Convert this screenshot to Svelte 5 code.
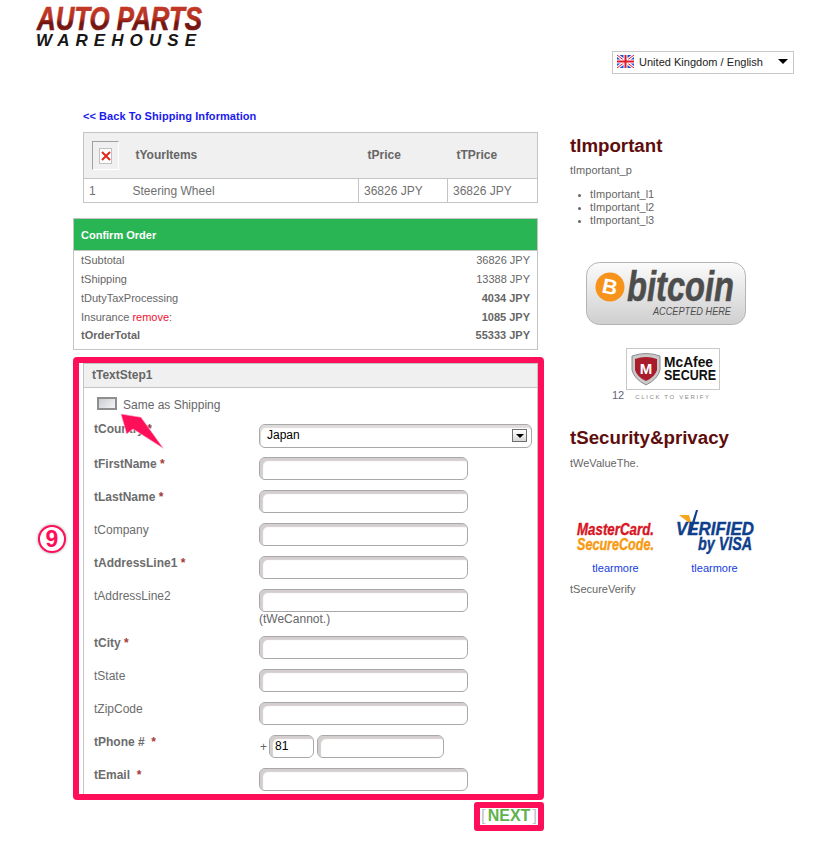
<script lang="ts">
  const rows = [
    { label: 'tFirstName', req: true, bold: true },
    { label: 'tLastName', req: true, bold: true },
    { label: 'tCompany' },
    { label: 'tAddressLine1', req: true, bold: true },
    { label: 'tAddressLine2', hint: '(tWeCannot.)' },
    { label: 'tCity', req: true, bold: true },
    { label: 'tState' },
    { label: 'tZipCode' },
  ];
</script>

<div class="page">
  <header class="top">
    <svg class="logo" width="172" height="44" viewBox="0 0 172 44" aria-label="Auto Parts Warehouse">
      <defs>
        <linearGradient id="red" x1="0" y1="0" x2="0" y2="1">
          <stop offset="0" stop-color="#c9402b" />
          <stop offset="0.5" stop-color="#b5301f" />
          <stop offset="0.62" stop-color="#6e1410" />
          <stop offset="1" stop-color="#8c1c14" />
        </linearGradient>
      </defs>
      <text x="1" y="25" textLength="165" lengthAdjust="spacingAndGlyphs" class="logo-a" fill="url(#red)" stroke="url(#red)">AUTO PARTS</text>
      <text x="0" y="41" textLength="160" class="logo-b">WAREHOUSE</text>
    </svg>
    <div class="locale">
      <svg width="17" height="13" viewBox="0 0 17 13">
        <rect width="17" height="13" fill="#1f4fd8" />
        <path d="M0 0L17 13M17 0L0 13" stroke="#fff" stroke-width="3" />
        <path d="M0 0L17 13M17 0L0 13" stroke="#e0182d" stroke-width="1" />
        <path d="M8.5 0V13M0 6.5H17" stroke="#fff" stroke-width="4" />
        <path d="M8.5 0V13M0 6.5H17" stroke="#e0182d" stroke-width="2" />
      </svg>
      <span>United Kingdom / English</span>
      <i class="caret"></i>
    </div>
  </header>

  <div class="columns">
    <main class="main">
      <a class="back" href="#back">&lt;&lt; Back To Shipping Information</a>

      <table class="items">
        <colgroup><col class="c1" /><col class="c2" /><col class="c3" /><col class="c4" /></colgroup>
        <thead>
          <tr>
            <th class="thumb-cell">
              <div class="thumb">
                <div class="broken">
                  <svg width="10" height="10" viewBox="0 0 10 10"><path d="M1 1L9 9M9 1L1 9" stroke="#e0281c" stroke-width="2" /></svg>
                </div>
              </div>
            </th>
            <th class="name-h">tYourItems</th>
            <th>tPrice</th>
            <th>tTPrice</th>
          </tr>
        </thead>
        <tbody>
          <tr>
            <td class="idx">1</td>
            <td class="name">Steering Wheel</td>
            <td class="price">36826 JPY</td>
            <td class="price">36826 JPY</td>
          </tr>
        </tbody>
      </table>

      <section class="confirm">
        <h3>Confirm Order</h3>
        <div class="line"><span>tSubtotal</span><span>36826 JPY</span></div>
        <div class="line"><span>tShipping</span><span>13388 JPY</span></div>
        <div class="line"><span>tDutyTaxProcessing</span><b>4034 JPY</b></div>
        <div class="line"><span>Insurance <a href="#remove">remove</a>:</span><b>1085 JPY</b></div>
        <div class="line total"><b>tOrderTotal</b><b>55333 JPY</b></div>
      </section>

      <div class="highlight">
        <div class="step9">9</div>
        <section class="panel">
          <h4>tTextStep1</h4>
          <div class="same">
            <span class="check"></span>
            <span>Same as Shipping</span>
          </div>

          <div class="row">
            <label class="country" for="country">tCountry <em>*</em></label>
            <div class="select-wrap">
              <select id="country"><option>Japan</option></select>
              <span class="sel-btn"><i></i></span>
            </div>
          </div>

          {#each rows as r}
            <div class="row">
              <label class:bold={r.bold}>{r.label}{#if r.req}&nbsp;<em>*</em>{/if}</label>
              <div>
                <input type="text" />
                {#if r.hint}<div class="hint">{r.hint}</div>{/if}
              </div>
            </div>
          {/each}

          <div class="row">
            <label class="bold">tPhone #&nbsp; <em>*</em></label>
            <div class="phone">
              <span class="plus">+</span>
              <input class="cc" type="text" value="81" />
              <input class="num" type="text" />
            </div>
          </div>

          <div class="row last">
            <label class="bold">tEmail &nbsp;<em>*</em></label>
            <div><input type="text" /></div>
          </div>

          <svg class="arrow" width="46" height="38" viewBox="0 0 46 38">
            <path d="M1 1L21 4.3L43.3 35.3L13 16L6.7 21Z" fill="#ff0f5a" stroke="#ffb3cc" stroke-width="0.6" />
          </svg>
        </section>
      </div>

      <div class="next-row">
        <div class="next"><span>[</span><b>NEXT</b><span>]</span></div>
      </div>
    </main>

    <aside class="side">
      <h2>tImportant</h2>
      <p class="imp">tImportant_p</p>
      <ul>
        <li>tImportant_l1</li>
        <li>tImportant_l2</li>
        <li>tImportant_l3</li>
      </ul>

      <svg class="bitcoin" width="160" height="63" viewBox="0 0 160 63">
        <defs>
          <linearGradient id="btc" x1="0" y1="0" x2="0" y2="1">
            <stop offset="0" stop-color="#fbfbfb" />
            <stop offset="1" stop-color="#cfcfcf" />
          </linearGradient>
        </defs>
        <rect x="0.5" y="0.5" width="159" height="62" rx="13" fill="url(#btc)" stroke="#b4b4b4" />
        <circle cx="24" cy="25" r="14.5" fill="#f7931a" />
        <text x="24" y="32" class="btc-b" transform="rotate(12 24 25)">B</text>
        <text x="41" y="39" textLength="107" lengthAdjust="spacingAndGlyphs" class="btc-word">bitcoin</text>
        <text x="67" y="53" textLength="78" lengthAdjust="spacingAndGlyphs" class="btc-sub">ACCEPTED HERE</text>
      </svg>

      <div class="mcafee-wrap">
        <span class="twelve">12</span>
        <div class="mcafee-col">
          <div class="mcafee">
            <svg width="88" height="34" viewBox="0 0 88 34">
              <path d="M1 4Q15 -1 29 4V18Q27 27 15 33Q3 27 1 18Z" fill="#c9c9c9" stroke="#8c8c8c" />
              <path d="M4 7Q15 3 26 7V18Q24 25 15 29Q6 25 4 18Z" fill="#a81c2c" />
              <text x="15" y="22" class="m">M</text>
              <text x="33" y="15" textLength="49" lengthAdjust="spacingAndGlyphs" class="mc-t">McAfee</text>
              <text x="33" y="28" textLength="52" lengthAdjust="spacingAndGlyphs" class="mc-t">SECURE</text>
            </svg>
          </div>
          <div class="verify">CLICK TO VERIFY</div>
        </div>
      </div>

      <h2 class="sec">tSecurity&amp;privacy</h2>
      <p class="value">tWeValueThe.</p>

      <div class="badges">
        <div class="badge">
          <svg class="mc-logo" width="79" height="32" viewBox="0 0 79 32">
            <text x="1" y="15" textLength="77" lengthAdjust="spacingAndGlyphs" class="mc-a">MasterCard.</text>
            <text x="1" y="30" textLength="77" lengthAdjust="spacingAndGlyphs" class="mc-b">SecureCode.</text>
          </svg>
          <a href="#mc">tlearmore</a>
        </div>
        <div class="badge">
          <svg class="visa-logo" width="80" height="44" viewBox="0 0 80 44">
            <path d="M4 7H14L17 17Z" fill="#f5a81c" />
            <path d="M13 27L21 2L23 2L16 27Z" fill="#0f3f8c" />
            <text x="1" y="27" textLength="78" lengthAdjust="spacingAndGlyphs" class="v-a">VERIFIED</text>
            <text x="23" y="42" textLength="54" lengthAdjust="spacingAndGlyphs" class="v-b">by VISA</text>
          </svg>
          <a href="#visa">tlearmore</a>
        </div>
      </div>
      <p class="verify-note">tSecureVerify</p>
    </aside>
  </div>
</div>

<style>
  :global(body) {
    margin: 0;
    background: #fff;
  }

  .page {
    font-family: "Liberation Sans", Arial, sans-serif;
    font-size: 12px;
    color: #666;
    width: 829px;
    height: 843px;
    overflow: hidden;
  }

  .top {
    display: flex;
    justify-content: space-between;
    align-items: flex-start;
    height: 109px;
    padding: 5px 35px 0 36px;
    box-sizing: border-box;
  }

  .logo {
    overflow: visible;
  }

  .logo-a {
    font: italic bold 33px "Liberation Sans", sans-serif;
    stroke-width: 0.7;
  }

  .logo-b {
    font: italic bold 17px "Liberation Sans", sans-serif;
    fill: #161616;
  }

  .locale {
    margin-top: 46px;
    width: 182px;
    height: 23px;
    box-sizing: border-box;
    border: 1px solid #c8c8c8;
    display: flex;
    align-items: center;
    padding: 0 0 2px 4px;
    gap: 5px;
    font-size: 11px;
    letter-spacing: 0.02px;
    color: #222;
  }

  .caret {
    margin-left: 10px;
    border-left: 5px solid transparent;
    border-right: 5px solid transparent;
    border-top: 5px solid #000;
  }

  .columns {
    display: flex;
    padding-left: 73px;
  }

  .main {
    width: 471px;
  }

  .back {
    display: block;
    margin-left: 10px;
    line-height: 14px;
    font-size: 11px;
    font-weight: bold;
    letter-spacing: 0.06px;
    color: #1a1aee;
    text-decoration: none;
  }

  .items {
    margin: 9px 0 0 10px;
    width: 455px;
    border-collapse: collapse;
    table-layout: fixed;
    border: 1px solid #c4c4c4;
  }

  .c1 { width: 49px; }
  .c2 { width: 226px; }
  .c3 { width: 89px; }

  .items th {
    height: 43px;
    padding: 0 0 2px 9px;
    background: #f0f0f0;
    text-align: left;
    font-size: 12px;
    color: #666;
    border-bottom: 1px solid #c4c4c4;
  }

  .items th.thumb-cell {
    height: 45px;
    padding: 0 0 0 8px;
  }

  .items th.name-h {
    padding-left: 3px;
  }

  .thumb {
    width: 27px;
    height: 29px;
    box-sizing: border-box;
    border: 1px solid #fff;
    border-top-color: #a0a0a0;
    border-left-color: #a0a0a0;
    background: #f0f0f0;
    display: flex;
    align-items: center;
    justify-content: center;
  }

  .broken {
    width: 13px;
    height: 16px;
    box-sizing: border-box;
    border: 1px solid #c0c0c0;
    background: #fff;
    display: flex;
    align-items: center;
    justify-content: center;
  }

  .items td {
    height: 23px;
    padding: 0;
    color: #707070;
  }

  .items td.idx {
    padding-left: 5px;
  }

  .items td.price {
    padding-left: 5px;
    border-left: 1px solid #c4c4c4;
  }

  .confirm {
    margin-top: 15px;
    width: 465px;
    box-sizing: border-box;
    border: 1px solid #c4c4c4;
    padding-bottom: 4px;
    font-size: 11px;
  }

  .confirm h3 {
    margin: 0;
    height: 31px;
    padding-left: 7px;
    line-height: 33px;
    background: #2ab555;
    color: #fff;
    font-size: 11px;
    font-weight: bold;
    border-bottom: 1px solid #c4c4c4;
    box-sizing: content-box;
  }

  .line {
    display: flex;
    justify-content: space-between;
    height: 19px;
    line-height: 19px;
    padding: 0 7px;
  }

  .line a {
    color: #f01030;
    text-decoration: none;
  }

  .line.total {
    height: 18px;
    line-height: 16px;
  }

  .highlight {
    position: relative;
    margin-top: 7px;
    border: 6px solid #ff0f5a;
    border-radius: 4px;
    padding-left: 4px;
  }

  .step9 {
    position: absolute;
    left: -41px;
    top: 162px;
    width: 24px;
    height: 24px;
    border: 2.5px solid #ff0f5a;
    border-radius: 50%;
    background: #fff;
    box-shadow: 0 0 3px #999;
    color: #ff0f5a;
    font-size: 23px;
    font-weight: bold;
    line-height: 24px;
    text-align: center;
  }

  .panel {
    position: relative;
    height: 431px;
    box-sizing: border-box;
    border-left: 1px solid #c4c4c4;
    border-right: 1px solid #c4c4c4;
    border-top: 1px solid #c4c4c4;
  }

  .panel h4 {
    margin: 0;
    height: 23px;
    line-height: 22px;
    padding-left: 8px;
    background: #f0f0f0;
    border-bottom: 1px solid #c4c4c4;
    font-size: 12px;
    font-weight: bold;
    color: #666;
  }

  .same {
    display: flex;
    align-items: flex-end;
    gap: 6px;
    height: 25px;
    margin-bottom: 11px;
    padding-left: 13px;
    line-height: 16px;
  }

  .check {
    width: 20px;
    height: 13px;
    box-sizing: border-box;
    margin-bottom: 3px;
    border: 2px solid #8e8e8e;
    background: linear-gradient(135deg, #c9cdd2, #f4f5f6);
  }

  .row {
    display: grid;
    grid-template-columns: 165px 1fr;
    padding-left: 10px;
    margin-bottom: 10px;
  }

  .row label {
    line-height: 14px;
    color: #6c6c6c;
  }

  .row label.bold,
  .row label.country {
    font-weight: bold;
  }

  .row label.country {
    margin-top: -2px;
  }

  .row label em {
    font-style: normal;
    color: #a33a3a;
  }

  input,
  select {
    display: block;
    box-sizing: border-box;
    height: 23px;
    width: 209px;
    padding: 0 6px 2px;
    border: 1px solid #a8a8a8;
    border-radius: 6px;
    background: #fff;
    box-shadow: inset 3px 3px 1px #d4cece;
    font: 12px "Liberation Sans", sans-serif;
    color: #000;
    outline: none;
  }

  .select-wrap {
    position: relative;
    width: 273px;
    height: 23px;
  }

  select {
    appearance: none;
    width: 273px;
    height: 24px;
    padding-left: 7px;
    box-shadow: inset 1px 3px 1px #e0dbdb;
  }

  .sel-btn {
    position: absolute;
    right: 5px;
    top: 5px;
    width: 15px;
    height: 13px;
    box-sizing: border-box;
    border: 1px solid #707070;
    background: linear-gradient(#fff, #d8d8d8);
    display: flex;
    align-items: center;
    justify-content: center;
  }

  .sel-btn i {
    border-left: 4px solid transparent;
    border-right: 4px solid transparent;
    border-top: 4px solid #000;
  }

  .hint {
    line-height: 15px;
    height: 14px;
    color: #666;
  }

  .phone {
    display: flex;
    align-items: center;
    gap: 3px;
  }

  .plus {
    width: 10px;
    margin-right: -3px;
    padding-left: 1px;
    box-sizing: border-box;
    color: #666;
  }

  input.cc {
    width: 45px;
    padding-left: 5px;
  }

  input.num {
    width: 127px;
  }

  .row.last {
    margin-bottom: 0;
  }

  .arrow {
    position: absolute;
    left: 36px;
    top: 49px;
  }

  .next-row {
    display: flex;
    justify-content: flex-end;
    margin-top: 2px;
  }

  .next {
    box-sizing: border-box;
    width: 70px;
    height: 29px;
    border: 6px solid #ff0f5a;
    border-radius: 3px;
    display: flex;
    justify-content: space-between;
    padding: 0 1px;
    line-height: 16px;
    font-size: 16px;
    color: #b9c2c6;
  }

  .next b {
    color: #5fb24e;
  }

  .side {
    margin-left: 26px;
    width: 230px;
    padding-top: 25px;
  }

  .side h2 {
    margin: 0;
    font-size: 18.7px;
    line-height: 23px;
    font-weight: bold;
    color: #5e0d0d;
  }

  .imp {
    margin: 7px 0 0;
    font-size: 11px;
    line-height: 13px;
  }

  .side ul {
    margin: 11px 0 0;
    padding-left: 20px;
    font-size: 11px;
    line-height: 13px;
  }

  .side li::marker {
    font-size: 9px;
  }

  .bitcoin {
    display: block;
    margin: 35px 0 0 16px;
  }

  .btc-b {
    font: bold 21px "Liberation Sans", sans-serif;
    fill: #fff;
    text-anchor: middle;
  }

  .btc-word {
    font: italic bold 43px "Liberation Sans", sans-serif;
    fill: #4d4d4d;
    stroke: #4d4d4d;
    stroke-width: 0.6;
  }

  .btc-sub {
    font: italic 11px "Liberation Sans", sans-serif;
    fill: #4d4d4d;
  }

  .mcafee-wrap {
    display: flex;
    align-items: flex-end;
    margin: 23px 0 0 42px;
  }

  .twelve {
    width: 14px;
    font-size: 11px;
    line-height: 13px;
    color: #667;
  }

  .mcafee {
    width: 94px;
    height: 42px;
    box-sizing: border-box;
    border: 1px solid #c8c8c8;
    display: flex;
    align-items: center;
    padding-left: 4px;
  }

  .mc-t {
    font: bold 15px "Liberation Sans", sans-serif;
    fill: #111;
  }

  .m {
    font: bold 15px "Liberation Sans", sans-serif;
    fill: #fff;
    text-anchor: middle;
  }

  .verify {
    margin-top: 2px;
    font-size: 6px;
    line-height: 10px;
    letter-spacing: 1.65px;
    color: #888;
    text-align: center;
    white-space: nowrap;
  }

  .side h2.sec {
    margin-top: 24px;
  }

  .value {
    margin: 8px 0 0;
    font-size: 11px;
    line-height: 13px;
  }

  .badges {
    display: flex;
    margin: 40px 0 0 6px;
  }

  .badge {
    display: flex;
    flex-direction: column;
    align-items: center;
    height: 65px;
    justify-content: flex-end;
    font-size: 11px;
    line-height: 13px;
    width: 79px;
  }

  .badge + .badge {
    margin-left: 20px;
  }

  .badge a {
    color: #1540e0;
    text-decoration: none;
    margin-top: 10px;
  }

  .mc-logo,
  .visa-logo {
    overflow: visible;
  }

  .mc-a,
  .mc-b {
    font: italic bold 17px "Liberation Sans", sans-serif;
    stroke-width: 0.4;
  }

  .mc-a { fill: #d8161f; stroke: #d8161f; }
  .mc-b { fill: #f79a10; stroke: #f79a10; }

  .v-a,
  .v-b {
    font: italic bold 18px "Liberation Sans", sans-serif;
    fill: #0f3f8c;
    stroke: #0f3f8c;
    stroke-width: 0.4;
  }

  .verify-note {
    margin: 8px 0 0;
    font-size: 11px;
    line-height: 13px;
  }
</style>
